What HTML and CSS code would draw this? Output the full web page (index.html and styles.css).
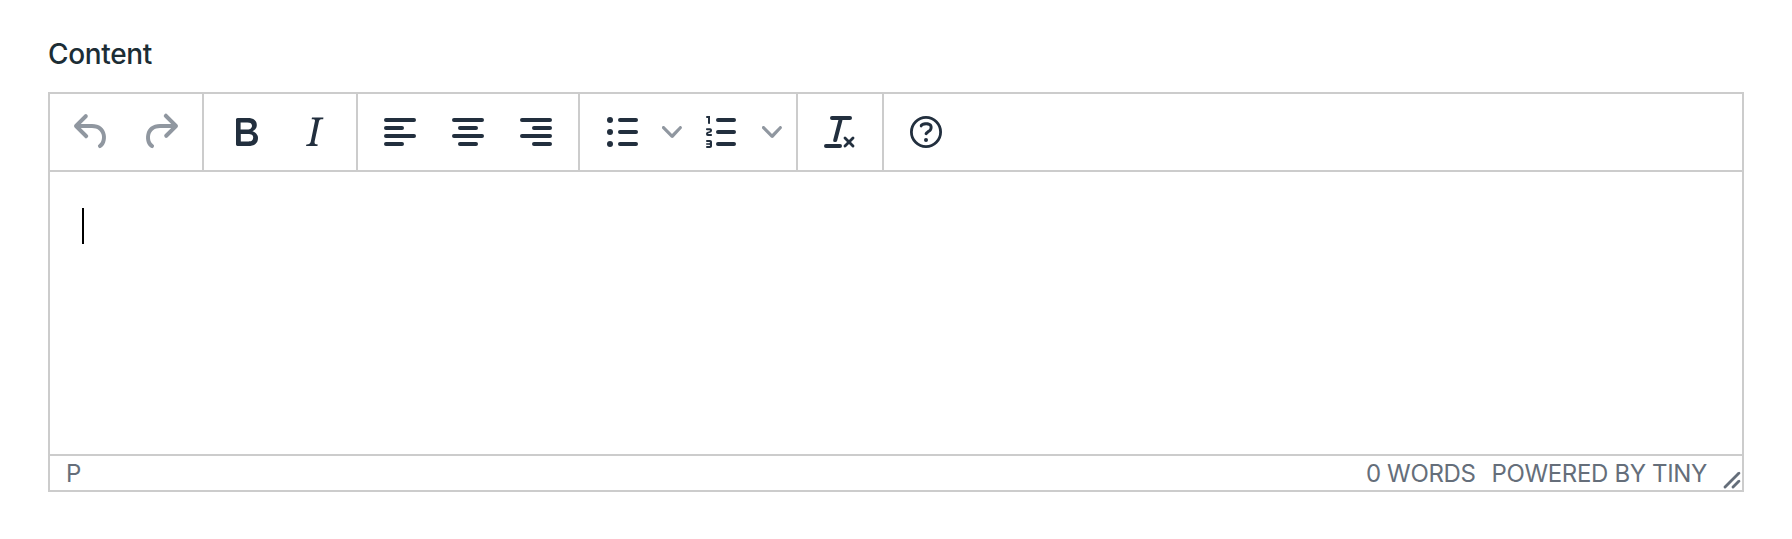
FILE: index.html
```
<!DOCTYPE html>
<html lang="en">
<head>
<meta charset="utf-8">
<title>Content</title>
<link rel="stylesheet" href="styles.css">
</head>
<body>
<main class="field">
  <div class="label">Content</div>
  <div class="editor">
    <div class="toolbar">
      <div class="group">
        <span class="btn disabled"><svg class="icon" viewBox="0 0 24 24"><path d="M6.4 8H12c3.7 0 6.2 2 6.8 5.1.6 2.7-.4 5.6-2.3 6.8a1 1 0 0 1-1-1.8c1.1-.6 1.8-2.7 1.4-4.6-.5-2.1-2.1-3.5-4.9-3.5H6.4l3.3 3.3a1 1 0 1 1-1.4 1.4l-5-5a1 1 0 0 1 0-1.4l5-5a1 1 0 0 1 1.4 1.4L6.4 8Z"/></svg></span>
        <span class="btn disabled"><svg class="icon" viewBox="0 0 24 24"><path d="M17.6 10H12c-2.8 0-4.4 1.4-4.9 3.5-.4 2 .3 4 1.4 4.6a1 1 0 1 1-1 1.8c-2-1.2-2.9-4.1-2.3-6.8.6-3 3-5.1 6.8-5.1h5.6l-3.3-3.3a1 1 0 1 1 1.4-1.4l5 5a1 1 0 0 1 0 1.4l-5 5a1 1 0 0 1-1.4-1.4l3.3-3.3Z"/></svg></span>
      </div>
      <div class="group">
        <span class="btn"><svg class="icon" viewBox="0 0 24 24"><path d="M7.8 19c-.3 0-.5 0-.6-.2l-.2-.5V5.7c0-.2 0-.4.2-.5l.6-.2h5c1.5 0 2.7.3 3.5 1 .7.6 1.1 1.4 1.1 2.5a3 3 0 0 1-.6 1.9c-.4.6-1 1-1.6 1.2.4.1.9.3 1.3.6s.8.7 1 1.2c.4.4.5 1 .5 1.6 0 1.3-.4 2.3-1.3 3-.8.7-2.1 1-3.8 1H7.8Zm5-8.3c.6 0 1.2-.1 1.6-.5.4-.3.6-.7.6-1.3 0-1.1-.8-1.7-2.3-1.7H9.3v3.5h3.4Zm.5 6c.7 0 1.3-.1 1.7-.4.4-.4.6-.9.6-1.5s-.2-1-.7-1.4c-.4-.3-1-.4-2-.4H9.4v3.8h4Z" fill-rule="evenodd"/></svg></span>
        <span class="btn"><svg class="icon" viewBox="0 0 24 24"><path d="m16.7 4.7-.1.9h-.3c-.6 0-1 0-1.4.3-.3.3-.4.6-.5 1.1l-2.1 9.8v.6c0 .5.4.8 1.4.8h.2l-.2.8H8l.2-.8h.2c1.1 0 1.8-.5 2-1.5l2-9.8.1-.5c0-.6-.4-.8-1.4-.8h-.3l.2-.9h5.8Z"/></svg></span>
      </div>
      <div class="group">
        <span class="btn"><svg class="icon lines" viewBox="0 0 24 24"><path d="M5 6h14M5 10h8M5 14h14M5 18h8"/></svg></span>
        <span class="btn"><svg class="icon lines" viewBox="0 0 24 24"><path d="M5 6h14M8 10h8M5 14h14M8 18h8"/></svg></span>
        <span class="btn"><svg class="icon lines" viewBox="0 0 24 24"><path d="M5 6h14M11 10h8M5 14h14M11 18h8"/></svg></span>
      </div>
      <div class="group">
        <span class="btn"><svg class="icon" viewBox="0 0 24 24"><path class="lines" d="M11 6h8M11 12h8M11 18h8"/><circle cx="6" cy="6" r="1.5"/><circle cx="6" cy="12" r="1.5"/><circle cx="6" cy="18" r="1.5"/></svg></span>
        <span class="arrow"><svg class="chevron" viewBox="0 0 10 10"><path d="M8.7 2.2c.3-.3.8-.3 1 0 .4.4.4.9 0 1.2L5.7 7.8c-.3.3-.9.3-1.2 0L.2 3.4a.8.8 0 0 1 0-1.2c.3-.3.8-.3 1.1 0L5 6l3.7-3.8Z"/></svg></span>
        <span class="btn"><svg class="icon" viewBox="0 0 24 24"><path class="lines" d="M10 6h8M10 12h8M10 18h8"/><path d="M6 4v3.5c0 .3-.2.5-.5.5a.5.5 0 0 1-.5-.5V5h-.5a.5.5 0 0 1 0-1H6Zm-1 8.8.2.2h1.3c.3 0 .5.2.5.5s-.2.5-.5.5H4.9a1 1 0 0 1-.9-1V13c0-.4.3-.8.6-1l1.2-.4.2-.3a.2.2 0 0 0-.2-.2H4.5a.5.5 0 0 1-.5-.5c0-.3.2-.5.5-.5h1.6c.5 0 .9.4.9 1v.1c0 .4-.3.8-.6 1l-1.2.4-.2.3ZM7 17v2c0 .6-.4 1-1 1H4.5a.5.5 0 0 1 0-1h1.2c.2 0 .3-.1.3-.3 0-.2-.1-.3-.3-.3H4.4a.4.4 0 1 1 0-.8h1.3c.2 0 .3-.1.3-.3 0-.2-.1-.3-.3-.3H4.5a.5.5 0 1 1 0-1H6c.6 0 1 .4 1 1Z"/></svg></span>
        <span class="arrow"><svg class="chevron" viewBox="0 0 10 10"><path d="M8.7 2.2c.3-.3.8-.3 1 0 .4.4.4.9 0 1.2L5.7 7.8c-.3.3-.9.3-1.2 0L.2 3.4a.8.8 0 0 1 0-1.2c.3-.3.8-.3 1.1 0L5 6l3.7-3.8Z"/></svg></span>
      </div>
      <div class="group">
        <span class="btn"><svg class="icon" viewBox="0 0 24 24"><path d="M13.2 6a1 1 0 0 1 0 .2l-2.6 10a1 1 0 0 1-1 .8h-.2a.8.8 0 0 1-.8-1l2.6-10H8a1 1 0 1 1 0-2h9a1 1 0 0 1 0 2h-3.8ZM5 18h7a1 1 0 0 1 0 2H5a1 1 0 0 1 0-2Zm13 1.5L16.5 18 15 19.5a.7.7 0 0 1-1-1l1.5-1.5-1.5-1.5a.7.7 0 0 1 1-1l1.5 1.5 1.5-1.5a.7.7 0 0 1 1 1L17.5 17l1.5 1.5a.7.7 0 0 1-1 1Z"/></svg></span>
      </div>
      <div class="group last">
        <span class="btn"><svg class="icon" viewBox="0 0 24 24"><circle class="ring" cx="12" cy="12" r="7.3"/><path d="M9.6 9.7a.7.7 0 0 1-.7-.8c0-1.1 1.5-1.8 3.2-1.8 1.8 0 3.2.8 3.2 2.4 0 1.4-.4 2.1-1.5 2.8-.2 0-.3.1-.3.2a2 2 0 0 0-.8.8.8.8 0 0 1-1.4-.6c.3-.7.8-1 1.3-1.5l.4-.2c.7-.4.8-.6.8-1.5 0-.5-.6-.9-1.7-.9-.5 0-1 .1-1.4.3-.2 0-.3.1-.3.2v-.2c0 .4-.4.8-.8.8Z"/><circle cx="12" cy="16" r="1"/></svg></span>
      </div>
    </div>
    <div class="content"><div class="caret"></div></div>
    <div class="statusbar">
      <span class="path">P</span>
      <span class="words">0 WORDS</span>
      <span class="brand">POWERED BY TINY</span>
      <svg class="handle" viewBox="0 0 10 10"><path d="M8.1 1.1A.5.5 0 1 1 9 2l-7 7A.5.5 0 1 1 1 8l7-7ZM8.1 5.1A.5.5 0 1 1 9 6l-3 3A.5.5 0 1 1 5 8l3-3Z"/></svg>
    </div>
  </div>
</main>
</body>
</html>
```
FILE: styles.css
```
* {
  box-sizing: border-box;
}

body {
  margin: 0;
  background: #fff;
  font-family: Inter, "Liberation Sans", sans-serif;
}

.field {
  padding: 34px 48px 0;
}

.label {
  height: 58px;
  font-size: 28px;
  font-weight: 500;
  line-height: 40px;
  letter-spacing: -0.35px;
  color: #1c2d35;
}

.editor {
  display: flex;
  flex-direction: column;
  height: 400px;
  border: 2px solid #ccc;
}

.toolbar {
  display: flex;
  height: 78px;
  border-bottom: 2px solid #ccc;
}

.group {
  display: flex;
  align-items: center;
  padding: 0 8px;
  border-right: 2px solid #ccc;
}

.last {
  border-right: 0;
}

.btn,
.arrow {
  display: flex;
  align-items: center;
  justify-content: center;
  width: 68px;
  height: 68px;
  fill: #222f3e;
}

.disabled,
.arrow {
  fill: #9097a0;
}

.arrow {
  width: 32px;
}

.icon {
  width: 48px;
  height: 48px;
}

.lines {
  fill: none;
  stroke: #222f3e;
  stroke-width: 2;
  stroke-linecap: round;
}

.ring {
  fill: none;
  stroke: #222f3e;
  stroke-width: 1.4;
}

.chevron {
  width: 20px;
  height: 20px;
}

.content {
  flex: 1;
  padding: 36px 32px;
}

.caret {
  width: 2px;
  height: 36px;
  background: #000;
}

.statusbar {
  display: flex;
  align-items: flex-end;
  height: 36px;
  padding-left: 16px;
  border-top: 2px solid #ccc;
  font-size: 24px;
  line-height: 32px;
  letter-spacing: -0.35px;
  color: #656e7a;
}

.path {
  flex: 1;
}

.words {
  margin-right: 16px;
}

.brand {
  margin-right: 15px;
}

.handle {
  width: 20px;
  height: 20px;
  fill: #656e7a;
}
```
